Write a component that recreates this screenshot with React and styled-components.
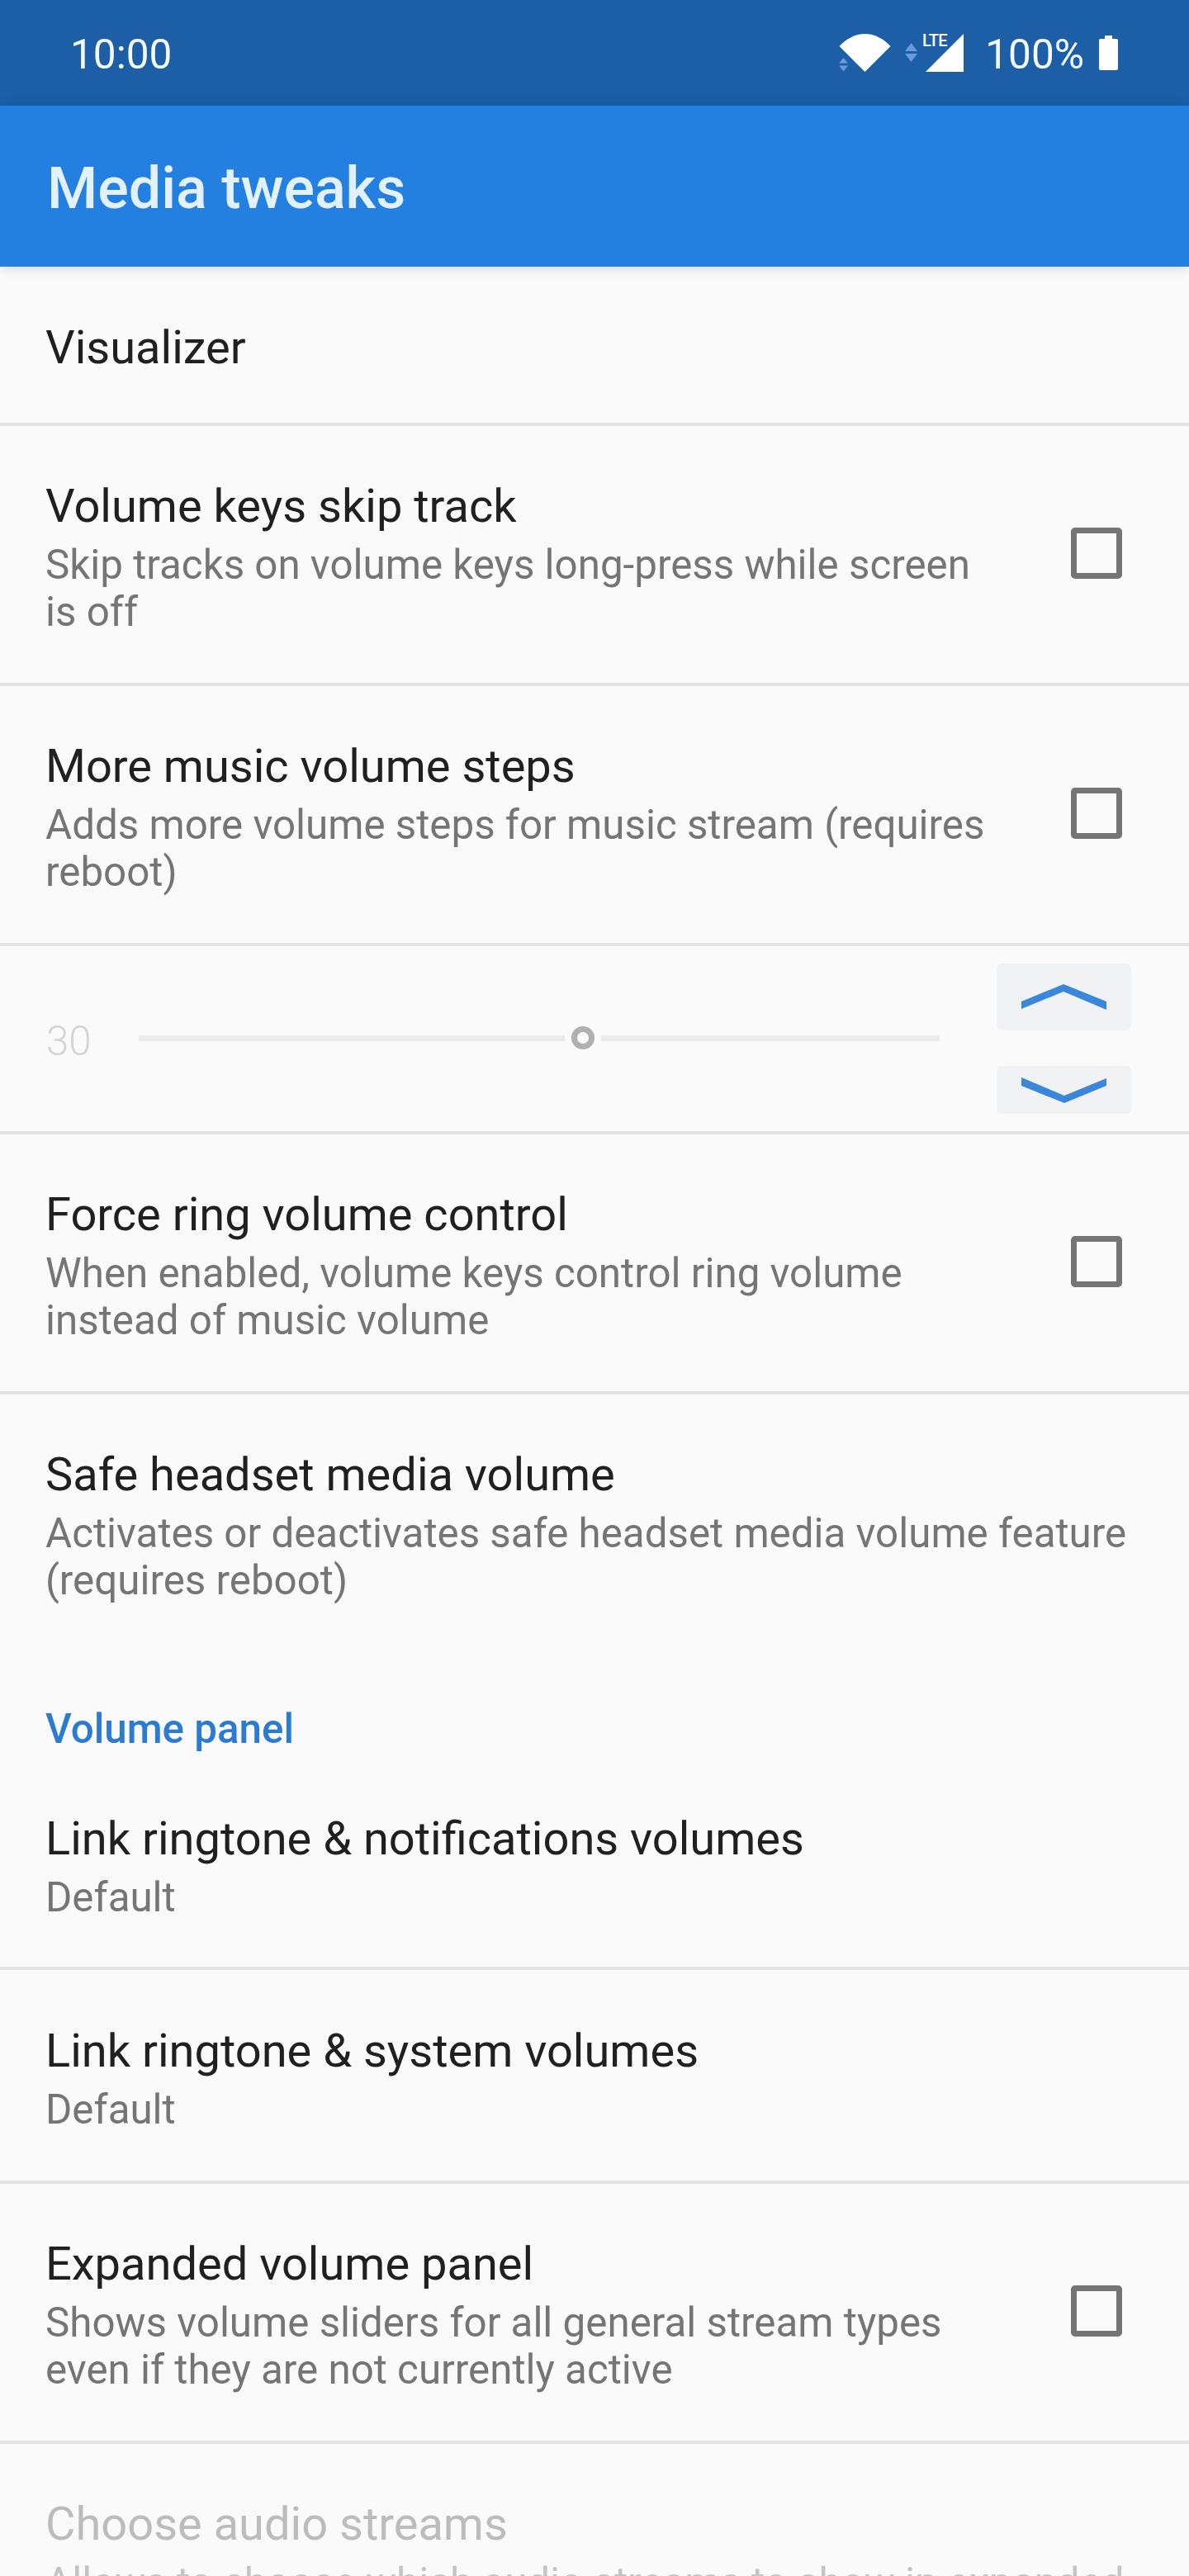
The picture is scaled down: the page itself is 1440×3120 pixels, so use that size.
import React from "react";
import styled, { createGlobalStyle } from "styled-components";

const Global = createGlobalStyle`
  html, body { margin: 0; padding: 0; background: #fafafa; }
  body { font-family: Roboto, "Noto Sans", sans-serif; -webkit-font-smoothing: antialiased; }
`;

const Screen = styled.div`
  width: 1440px;
  height: 3120px;
  overflow: hidden;
  background: #fafafa;
`;
const StatusBar = styled.div`
  height: 128px;
  box-sizing: border-box;
  padding: 0 86px 0 85px;
  background: #1c5fa7;
  color: #f4f9fd;
  display: flex;
  align-items: center;
  justify-content: space-between;
  font-size: 49.5px;
`;
const StatusText = styled.span`
  padding-top: 3px;
`;
const StatusRight = styled.div`
  display: flex;
  align-items: center;
`;
const Percent = styled(StatusText)`
  margin: 0 18px 0 26px;
`;
const Toolbar = styled.header`
  height: 195px;
  box-sizing: border-box;
  padding: 5px 0 0 57px;
  background: #2480e0;
  color: #e3f1fc;
  display: flex;
  align-items: center;
  font-size: 70px;
  font-weight: 500;
  box-shadow: 0 2px 14px rgba(0, 0, 0, 0.14);
`;
const List = styled.main`
  display: flex;
  flex-direction: column;
`;
const Row = styled.section`
  display: flex;
  align-items: center;
  box-sizing: border-box;
  padding: ${(p) => p.$top}px 56px ${(p) => p.$bottom}px 55px;
  border-bottom: ${(p) => (p.$plain ? "none" : "4px solid #e2e2e2")};
`;
const RowText = styled.div`
  flex: 1;
  min-width: 0;
  max-width: ${(p) => (p.$narrow ? "1165px" : "none")};
  margin-right: auto;
`;
const Title = styled.div`
  font-size: 56px;
  line-height: 66px;
  color: ${(p) => (p.$disabled ? "#bcbcbc" : "#202020")};
`;
const Summary = styled.div`
  margin-top: 10px;
  font-size: 49.3px;
  line-height: 57px;
  color: ${(p) => (p.$disabled ? "#c4c4c4" : "#757575")};
`;
const Check = styled.div`
  flex: none;
  width: 62px;
  height: 62px;
  box-sizing: border-box;
  border: 7px solid #757575;
  border-radius: 5px;
  margin: -10px 25px 0 0;
`;
const SectionHeader = styled.h2`
  margin: 0;
  padding: 66px 55px 8px;
  font-size: 49.3px;
  line-height: 56px;
  font-weight: 500;
  color: #2b7bd0;
`;
const SliderRow = styled.section`
  height: 228px;
  box-sizing: border-box;
  padding: 0 70px 0 56px;
  display: flex;
  align-items: center;
  border-bottom: 4px solid #e2e2e2;
`;
const SliderValue = styled.span`
  width: 112px;
  flex: none;
  padding-top: 5px;
  font-size: 49.3px;
  font-weight: 300;
  color: #d4d4d4;
`;
const Slider = styled.div`
  flex: 1;
  display: flex;
  align-items: center;
  gap: 8px;
  margin: 0 69px 2px 0;
`;
const Track = styled.div`
  height: 7px;
  background: #ebebeb;
  flex: ${(p) => p.$flex};
`;
const Thumb = styled.div`
  flex: none;
  width: 28px;
  height: 28px;
  box-sizing: border-box;
  border: 7px solid #b0b0b0;
  border-radius: 50%;
`;
const Steppers = styled.div`
  flex: none;
  display: flex;
  flex-direction: column;
  gap: 43px;
`;
const StepButton = styled.div`
  width: 163px;
  height: ${(p) => p.$h}px;
  border-radius: 6px;
  background: #f1f2f3;
  display: flex;
  align-items: center;
  justify-content: center;
`;
const ChevronSvg = styled.svg`
  transform: ${(p) => (p.$down ? "rotate(180deg)" : "none")};
`;

const Glyphs = () => (
  <svg width="151" height="46" viewBox="0 0 151 46">
    <path d="M0.5 15 C9 6 20 0 31.5 0 C43 0 54 6 62.5 15 L31.5 46 Z" fill="#fff" />
    <path d="M5.5 29 L11 35.5 H0 Z M0 38.5 H11 L5.5 45.5 Z" fill="#6a9ad8" />
    <path d="M87.5 11 L95 21 H80 Z M80 24 H95 L87.5 34 Z" fill="#6a9ad8" />
    <text x="101" y="15" fontFamily="Roboto, sans-serif" fontWeight="500" fontSize="20" letterSpacing="-0.6" fill="#fff">LTE</text>
    <path d="M105 46 L151 0 V46 Z" fill="#fff" />
  </svg>
);
const Battery = () => (
  <svg width="23" height="42" viewBox="0 0 23 42">
    <path d="M7 0 H16 V4 H21 Q23 4 23 6 V40 Q23 42 21 42 H2 Q0 42 0 40 V6 Q0 4 2 4 H7 Z" fill="#fff" />
  </svg>
);
const Chevron = ({ down }) => (
  <ChevronSvg $down={down} width="103" height="31" viewBox="0 0 103 31">
    <polygon points="0,21 51,0 103,21 103,31 51,9 0,30" fill="#3a86da" />
  </ChevronSvg>
);

const Pref = ({ title, summary, check, disabled, plain, top = 64, bottom = 57 }) => (
  <Row $plain={plain} $top={top} $bottom={bottom}>
    <RowText $narrow={check}>
      <Title $disabled={disabled}>{title}</Title>
      {summary && <Summary $disabled={disabled}>{summary}</Summary>}
    </RowText>
    {check && <Check />}
  </Row>
);

export default function App() {
  return (
    <Screen>
      <Global />
      <StatusBar>
        <StatusText>10:00</StatusText>
        <StatusRight>
          <Glyphs />
          <Percent>100%</Percent>
          <Battery />
        </StatusRight>
      </StatusBar>
      <Toolbar>Media tweaks</Toolbar>
      <List>
        <Pref title="Visualizer" top={65} bottom={58} />
        <Pref title="Volume keys skip track" summary="Skip tracks on volume keys long-press while screen is off" check />
        <Pref title="More music volume steps" summary="Adds more volume steps for music stream (requires reboot)" check />
        <SliderRow>
          <SliderValue>30</SliderValue>
          <Slider>
            <Track $flex="517" />
            <Thumb />
            <Track $flex="410" />
          </Slider>
          <Steppers>
            <StepButton $h={81}><Chevron /></StepButton>
            <StepButton $h={58}><Chevron down /></StepButton>
          </Steppers>
        </SliderRow>
        <Pref title="Force ring volume control" summary="When enabled, volume keys control ring volume instead of music volume" check />
        <Pref title="Safe headset media volume" summary="Activates or deactivates safe headset media volume feature (requires reboot)" plain />
        <SectionHeader>Volume panel</SectionHeader>
        <Pref title="Link ringtone & notifications volumes" summary="Default" bottom={55} />
        <Pref title="Link ringtone & system volumes" summary="Default" top={65} />
        <Pref title="Expanded volume panel" summary="Shows volume sliders for all general stream types even if they are not currently active" check />
        <Pref title="Choose audio streams" summary="Allows to choose which audio streams to show in expanded volume panel" disabled />
      </List>
    </Screen>
  );
}
